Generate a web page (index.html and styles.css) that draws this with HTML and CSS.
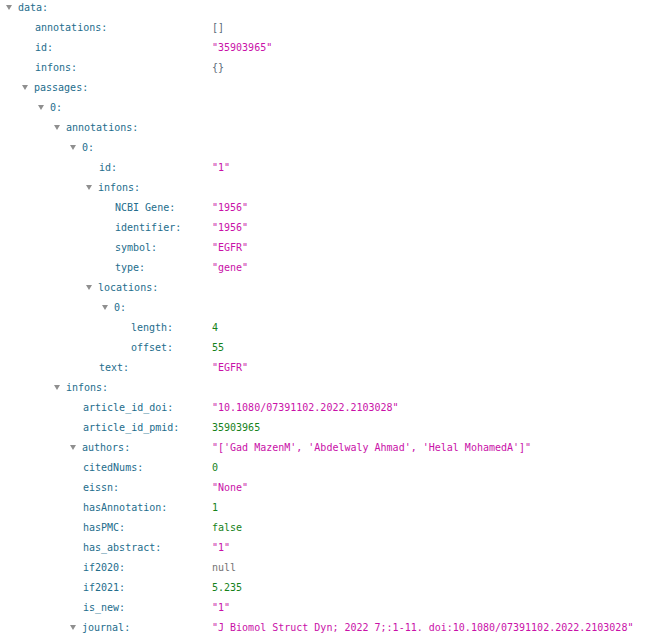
FILE: index.html
```html
<!DOCTYPE html>
<html>
<head>
<meta charset="utf-8">
<link rel="stylesheet" href="styles.css">
</head>
<body>
<div class="tree">
  <div class="row l0"><span class="label"><i class="tw"></i>data:</span></div>
  <div class="row l1"><span class="label">annotations:</span><span class="val plain">[]</span></div>
  <div class="row l1"><span class="label">id:</span><span class="val str">"35903965"</span></div>
  <div class="row l1"><span class="label">infons:</span><span class="val plain">{}</span></div>
  <div class="row l1"><span class="label"><i class="tw"></i>passages:</span></div>
  <div class="row l2"><span class="label"><i class="tw"></i>0:</span></div>
  <div class="row l3"><span class="label"><i class="tw"></i>annotations:</span></div>
  <div class="row l4"><span class="label"><i class="tw"></i>0:</span></div>
  <div class="row l5"><span class="label">id:</span><span class="val str">"1"</span></div>
  <div class="row l5"><span class="label"><i class="tw"></i>infons:</span></div>
  <div class="row l6"><span class="label">NCBI Gene:</span><span class="val str">"1956"</span></div>
  <div class="row l6"><span class="label">identifier:</span><span class="val str">"1956"</span></div>
  <div class="row l6"><span class="label">symbol:</span><span class="val str">"EGFR"</span></div>
  <div class="row l6"><span class="label">type:</span><span class="val str">"gene"</span></div>
  <div class="row l5"><span class="label"><i class="tw"></i>locations:</span></div>
  <div class="row l6"><span class="label"><i class="tw"></i>0:</span></div>
  <div class="row l7"><span class="label">length:</span><span class="val num">4</span></div>
  <div class="row l7"><span class="label">offset:</span><span class="val num">55</span></div>
  <div class="row l5"><span class="label">text:</span><span class="val str">"EGFR"</span></div>
  <div class="row l3"><span class="label"><i class="tw"></i>infons:</span></div>
  <div class="row l4"><span class="label">article_id_doi:</span><span class="val str">"10.1080/07391102.2022.2103028"</span></div>
  <div class="row l4"><span class="label">article_id_pmid:</span><span class="val num">35903965</span></div>
  <div class="row l4"><span class="label"><i class="tw"></i>authors:</span><span class="val str">"['Gad MazenM', 'Abdelwaly Ahmad', 'Helal MohamedA']"</span></div>
  <div class="row l4"><span class="label">citedNums:</span><span class="val num">0</span></div>
  <div class="row l4"><span class="label">eissn:</span><span class="val str">"None"</span></div>
  <div class="row l4"><span class="label">hasAnnotation:</span><span class="val num">1</span></div>
  <div class="row l4"><span class="label">hasPMC:</span><span class="val num">false</span></div>
  <div class="row l4"><span class="label">has_abstract:</span><span class="val str">"1"</span></div>
  <div class="row l4"><span class="label">if2020:</span><span class="val null">null</span></div>
  <div class="row l4"><span class="label">if2021:</span><span class="val num">5.235</span></div>
  <div class="row l4"><span class="label">is_new:</span><span class="val str">"1"</span></div>
  <div class="row l4"><span class="label"><i class="tw"></i>journal:</span><span class="val str">"J Biomol Struct Dyn; 2022 7;:1-11. doi:10.1080/07391102.2022.2103028"</span></div>
</div>
</body>
</html>
```

FILE: styles.css
```css
html, body {
  margin: 0;
  padding: 0;
  background: #ffffff;
}
body {
  font-family: "DejaVu Sans Mono", "Liberation Mono", monospace;
  font-size: 10px;
  overflow: hidden;
}
.tree {
  margin-top: -3px;
  display: flex;
  flex-direction: column;
}
.row {
  display: flex;
  height: 20px;
  align-items: center;
  white-space: pre;
}
.label {
  box-sizing: border-box;
  width: 212px;
  flex: none;
  color: #236d8c;
  position: relative;
}
.l0 .label { padding-left: 19px; }
.l1 .label { padding-left: 35px; }
.l2 .label { padding-left: 51px; }
.l3 .label { padding-left: 67px; }
.l4 .label { padding-left: 83px; }
.l5 .label { padding-left: 99px; }
.l6 .label { padding-left: 115px; }
.l7 .label { padding-left: 131px; }
.tw {
  display: inline-block;
  width: 0;
  height: 0;
  border-left: 3.5px solid transparent;
  border-right: 3.5px solid transparent;
  border-top: 5px solid #8f8f8f;
  margin-left: -13px;
  margin-right: 6px;
  vertical-align: 1px;
}
.val.str { color: #c911a8; }
.val.num { color: #15821a; }
.val.null { color: #737373; }
.val.plain { color: #5a6a78; }
```
